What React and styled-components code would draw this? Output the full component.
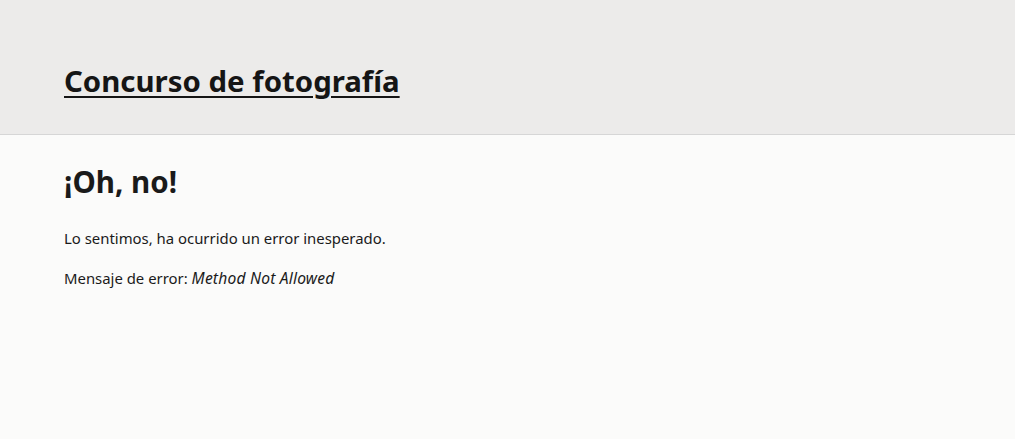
import styled, { createGlobalStyle } from "styled-components";

const GlobalStyle = createGlobalStyle`
  html, body {
    margin: 0;
    padding: 0;
    background: #fbfbfa;
    color: #1a1a1a;
    font-family: "Noto Sans", "Open Sans", sans-serif;
  }
`;

const Header = styled.header`
  background: #ecebea;
  border-bottom: 1px solid #d6d6d6;
  height: 135px;
  box-sizing: border-box;
  padding: 0 64px;
  display: flex;
  align-items: center;
`;

const SiteTitle = styled.a`
  font-size: 29.4px;
  font-weight: 700;
  color: #151515;
  text-decoration: underline;
  text-decoration-thickness: 2px;
  text-underline-offset: 4px;
  margin-top: 27px;
`;

const Main = styled.main`
  padding: 28px 64px;
`;

const Heading = styled.h2`
  margin: 0 0 25px;
  font-size: 29.5px;
  font-weight: 700;
  line-height: 38px;
`;

const Text = styled.p`
  margin: 0 0 16px;
  font-size: 14.9px;
  line-height: 24px;

  em {
    font-size: 15.6px;
    letter-spacing: 0.2px;
  }
`;

export default function App() {
  return (
    <>
      <GlobalStyle />
      <Header>
        <SiteTitle href="#">Concurso de fotografía</SiteTitle>
      </Header>
      <Main>
        <Heading>¡Oh, no!</Heading>
        <Text>Lo sentimos, ha ocurrido un error inesperado.</Text>
        <Text>
          Mensaje de error: <em>Method Not Allowed</em>
        </Text>
      </Main>
    </>
  );
}
